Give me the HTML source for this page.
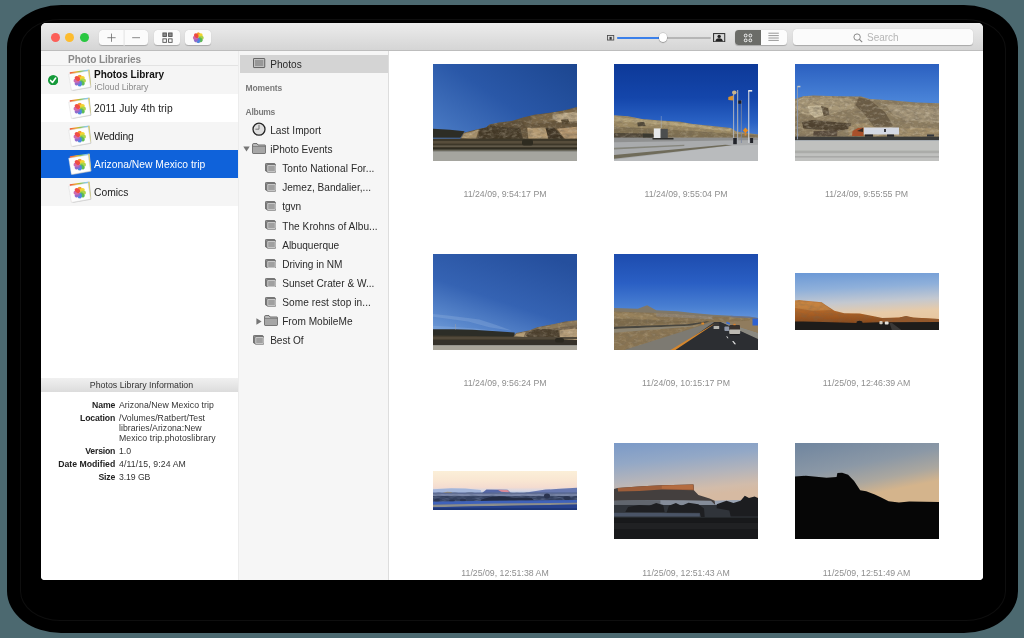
<!DOCTYPE html>
<html>
<head>
<meta charset="utf-8">
<title>Photo Libraries</title>
<style>
html,body{margin:0;padding:0;}
body{width:1024px;height:638px;overflow:hidden;background:#4c6970;font-family:"Liberation Sans",sans-serif;position:relative;}
#shadow{position:absolute;left:7px;top:5px;width:1010.5px;height:627.5px;background:#000;border-radius:54px / 42px;}
#shadowline{position:absolute;left:19.5px;top:18.5px;width:984px;height:600px;border:1px solid #0e0e0e;border-radius:40px / 30px;}
#win{position:absolute;left:41px;top:23px;width:942px;height:556.5px;background:#fff;border-radius:5px 5px 4px 4px;overflow:hidden;will-change:transform;}
#toolbar{position:absolute;left:0;top:0;width:942px;height:28px;background:linear-gradient(#ececec,#d5d5d5);border-bottom:1px solid #bdbdbd;box-sizing:border-box;}
.tl{position:absolute;top:10px;width:9.3px;height:9.3px;border-radius:50%;}
.btn{position:absolute;top:6.5px;height:15.6px;background:#fbfbfb;border-radius:3.5px;box-shadow:0 0.5px 0.8px rgba(0,0,0,.22);}
.btn svg{position:absolute;left:0;top:0;}
#left{position:absolute;left:0;top:28px;width:197px;height:529px;background:#fff;}
#lhead{position:absolute;left:0;top:0;width:197px;height:15px;background:#f6f6f6;border-bottom:1px solid #e3e3e3;box-sizing:border-box;}
#lhead span{position:absolute;left:27px;top:3.6px;font-size:10.1px;line-height:10.1px;font-weight:bold;color:#8a8a8a;white-space:nowrap;}
.lrow{position:absolute;left:0;width:197px;height:28px;}
.lrow .t{position:absolute;left:53px;top:10.4px;font-size:10.3px;line-height:10.3px;color:#222;white-space:nowrap;}
.lrow svg{position:absolute;left:25.6px;top:2.8px;}
.odd{background:#f5f5f5;}
.sel{background:#0f62da;}
.sel .t{color:#fff;}
#infohead{position:absolute;left:0;top:327px;width:197px;height:14px;background:linear-gradient(#f0f0f0,#dcdcdc);text-align:center;font-size:8.8px;line-height:14.6px;color:#333;padding-left:4px;box-sizing:border-box;}
.il{position:absolute;width:74.2px;left:0;text-align:right;font-size:8.7px;line-height:8.7px;font-weight:bold;color:#222;white-space:nowrap;}
.iv{position:absolute;left:78px;font-size:8.7px;line-height:8.7px;color:#333;white-space:nowrap;}
#mid{position:absolute;left:197px;top:28px;width:151px;height:529px;background:#f6f6f6;border-left:1px solid #ececec;border-right:1px solid #dddddd;box-sizing:border-box;}
#msel{position:absolute;left:1px;top:4px;width:148px;height:17.5px;background:#d4d4d4;}
.m{position:absolute;font-size:10.1px;line-height:10.1px;color:#2a2a2a;white-space:nowrap;}
.mh{position:absolute;left:6.6px;font-size:8.5px;color:#7a7a7a;font-weight:bold;white-space:nowrap;}
#mid svg{position:absolute;}
#content{position:absolute;left:348px;top:28px;width:594px;height:529px;background:#fff;}
.cap{position:absolute;width:181px;text-align:center;font-size:8.75px;color:#8e8e8e;white-space:nowrap;}
.ph{position:absolute;overflow:hidden;}
</style>
</head>
<body>
<svg width="0" height="0" style="position:absolute"><defs>
<symbol id="flower" viewBox="-10 -10 20 20">
<g opacity="0.92">
<ellipse cx="0" cy="-5" rx="3.4" ry="4.6" fill="#f7941d"/>
<ellipse cx="0" cy="-5" rx="3.4" ry="4.6" fill="#f2d21f" transform="rotate(45)"/>
<ellipse cx="0" cy="-5" rx="3.4" ry="4.6" fill="#a8d13a" transform="rotate(90)"/>
<ellipse cx="0" cy="-5" rx="3.4" ry="4.6" fill="#4fb748" transform="rotate(135)"/>
<ellipse cx="0" cy="-5" rx="3.4" ry="4.6" fill="#3f7fe0" transform="rotate(180)"/>
<ellipse cx="0" cy="-5" rx="3.4" ry="4.6" fill="#8a5fc8" transform="rotate(225)"/>
<ellipse cx="0" cy="-5" rx="3.4" ry="4.6" fill="#cc5fa8" transform="rotate(270)"/>
<ellipse cx="0" cy="-5" rx="3.4" ry="4.6" fill="#ef3e36" transform="rotate(315)"/>
</g>
</symbol>
<symbol id="lib" viewBox="0 0 24 24" preserveAspectRatio="none">
<defs><linearGradient id="rb" x1="0" y1="0" x2="1" y2="0"><stop offset="0" stop-color="#f0503c"/><stop offset=".3" stop-color="#f5a623"/><stop offset=".5" stop-color="#8cc63f"/><stop offset=".75" stop-color="#7fc8e8"/><stop offset="1" stop-color="#8fb4e8"/></linearGradient></defs>
<polygon points="3.2,3.6 21.8,1 23.4,18.2 5,21.2" fill="#c9c9c9"/>
<polygon points="2.6,3.2 21.4,0.6 23,17.6 4.4,20.6" fill="url(#rb)"/>
<polygon points="20.2,1.4 21.4,0.6 23,17.6 22,18" fill="#f1d84a"/>
<polygon points="2.4,6 20.6,2.4 23.2,19 5.2,22.2" fill="#b5b5b5" opacity=".55"/>
<polygon points="1.6,5.2 20.2,2 22.6,18.2 4.2,21.6" fill="#fdfdfd" stroke="#d4d4d4" stroke-width="0.4"/>
<use href="#flower" x="6" y="5.6" width="12.4" height="12.4"/>
</symbol>
<symbol id="alb" viewBox="0 0 11.6 9.8">
<rect x="0.4" y="0.4" width="9.6" height="7.8" rx="1" fill="#8e8e8e" stroke="#585858" stroke-width="0.8"/>
<rect x="1.8" y="1.6" width="9.4" height="7.8" rx="1.2" fill="#d4d4d4" stroke="#5e5e5e" stroke-width="0.8"/>
<rect x="3.2" y="2.9" width="6.6" height="5.2" fill="#a0a0a0"/>
</symbol>
<symbol id="fold" viewBox="0 0 14 11">
<path d="M0.6 1.6 Q0.6 0.6 1.6 0.6 L5 0.6 L6 2 L12.9 2 Q13.4 2 13.4 2.5 L13.4 9.9 Q13.4 10.4 12.9 10.4 L1.1 10.4 Q0.6 10.4 0.6 9.9 Z" fill="#c2c2c2" stroke="#555" stroke-width="0.85"/>
<rect x="1.1" y="3.7" width="11.8" height="6.2" fill="#a6a6a6"/>
<line x1="0.8" y1="3.4" x2="13.2" y2="3.4" stroke="#666" stroke-width="0.7"/>
</symbol>
<filter id="nzd" x="0" y="0" width="100%" height="100%"><feTurbulence type="fractalNoise" baseFrequency="0.16 0.3" numOctaves="3" seed="7"/><feColorMatrix type="matrix" values="0 0 0 0 0.16  0 0 0 0 0.13  0 0 0 0 0.09  2.2 0 0 0 -0.85"/></filter>
<filter id="nzl" x="0" y="0" width="100%" height="100%"><feTurbulence type="fractalNoise" baseFrequency="0.2 0.35" numOctaves="3" seed="23"/><feColorMatrix type="matrix" values="0 0 0 0 0.86  0 0 0 0 0.78  0 0 0 0 0.62  0 2.4 0 0 -1.15"/></filter>
</defs></svg>
<div id="shadow"></div>
<div id="shadowline"></div>
<div id="win">
<div id="toolbar">
<div class="tl" style="left:9.7px;background:#fc5f58;"></div>
<div class="tl" style="left:24.2px;background:#fdbc2e;"></div>
<div class="tl" style="left:39px;background:#29c741;"></div>
<div class="btn" style="left:57.5px;width:49.6px;"><svg width="50" height="16" viewBox="0 0 50 16"><line x1="25.1" y1="0" x2="25.1" y2="16" stroke="#e2e2e2" stroke-width="1"/><path d="M8.4 7.7 H16.6 M12.5 3.6 V11.8" stroke="#6a6a6a" stroke-width="0.8" fill="none"/><path d="M33.2 7.7 H41" stroke="#6a6a6a" stroke-width="0.8" fill="none"/></svg></div>
<div class="btn" style="left:112.6px;width:26px;"><svg width="26" height="16" viewBox="0 0 26 16"><rect x="8.9" y="2.95" width="3.5" height="3.5" fill="#8a8a8a" stroke="#505050" stroke-width="0.9"/><rect x="14.6" y="2.95" width="3.5" height="3.5" fill="#8a8a8a" stroke="#505050" stroke-width="0.9"/><rect x="8.9" y="8.85" width="3.5" height="3.5" fill="#fbfbfb" stroke="#505050" stroke-width="0.9"/><rect x="14.6" y="8.85" width="3.5" height="3.5" fill="#fbfbfb" stroke="#505050" stroke-width="0.9"/></svg></div>
<div class="btn" style="left:144.3px;width:26px;"><svg width="26" height="16" viewBox="0 0 26 16"><circle cx="13.3" cy="8.2" r="4.9" fill="#aaa" opacity=".45"/><use href="#flower" x="7.6" y="2" width="11.4" height="11.4"/></svg></div>
<svg style="position:absolute;left:566.3px;top:12.2px" width="8" height="6" viewBox="0 0 8 6"><rect x="0.45" y="0.45" width="6.3" height="4.6" fill="#dcdcdc" stroke="#4a4a4a" stroke-width="0.85"/><rect x="2.5" y="1.9" width="2.2" height="2.8" fill="#3a3a3a"/></svg>
<div style="position:absolute;left:575.5px;top:13.6px;width:94px;height:2px;background:#b6b6b6;border-radius:1px;"></div>
<div style="position:absolute;left:575.5px;top:13.6px;width:46px;height:2px;background:#3b80ea;border-radius:1px;"></div>
<div style="position:absolute;left:617.6px;top:10.2px;width:8.6px;height:8.6px;border-radius:50%;background:#fff;box-shadow:0 0.5px 1px rgba(0,0,0,.45),0 0 0 0.4px rgba(0,0,0,.15);"></div>
<svg style="position:absolute;left:672.3px;top:9.7px" width="12.3" height="9.3" viewBox="0 0 13 10" preserveAspectRatio="none"><rect x="0.6" y="0.6" width="11.8" height="8.8" fill="#d8d8d8" stroke="#333" stroke-width="1.1"/><circle cx="6.5" cy="3.7" r="1.8" fill="#222"/><path d="M2.6 9 Q2.8 5.6 6.5 5.6 Q10.2 5.6 10.4 9 Z" fill="#222"/></svg>
<div class="btn" style="left:694.2px;width:52px;background:#fcfcfc;"></div>
<div class="btn" style="left:694.2px;width:26.2px;background:#6b6c68;border-radius:3.5px 0 0 3.5px;box-shadow:none;"><svg width="26" height="16" viewBox="0 0 26 16"><g fill="none" stroke="#fff" stroke-width="0.9"><rect x="9.3" y="4.2" width="2.7" height="2.7" rx="1"/><rect x="14" y="4.2" width="2.7" height="2.7" rx="1"/><rect x="9.3" y="9" width="2.7" height="2.7" rx="1"/><rect x="14" y="9" width="2.7" height="2.7" rx="1"/></g></svg></div>
<svg style="position:absolute;left:720.4px;top:6.3px" width="26" height="16" viewBox="0 0 26 16"><path d="M7.4 4.2 H17.8 M7.4 6.6 H17.8 M7.4 9 H17.8 M7.4 11.4 H17.8" stroke="#8c8c8c" stroke-width="0.9"/></svg>
<div class="btn" style="left:752.3px;width:179.6px;height:16.4px;top:6px;"></div>
<svg style="position:absolute;left:812.3px;top:9.6px" width="10" height="10" viewBox="0 0 10 10"><circle cx="4.1" cy="4.1" r="3.2" fill="none" stroke="#858585" stroke-width="0.95"/><line x1="6.4" y1="6.4" x2="9.2" y2="9.2" stroke="#858585" stroke-width="1.1"/></svg>
<div style="position:absolute;left:826px;top:8.6px;font-size:10px;color:#b5b5b5;">Search</div>
</div>
<div id="left">
<div id="lhead"><span style="letter-spacing:-0.065px;">Photo Libraries</span></div>
<div class="lrow odd" style="top:15px;"><svg width="25" height="23.8"><use href="#lib" width="25" height="23.8"/></svg><svg style="left:6.8px;top:9px" width="10.4" height="10.4" viewBox="0 0 10 10"><circle cx="5" cy="5" r="5" fill="#159a3a"/><path d="M2.5 5.2 L4.3 7.2 L7.4 2.9" fill="none" stroke="#fff" stroke-width="1.5" stroke-linecap="round" stroke-linejoin="round"/></svg><span class="t" style="top:3.5px;font-weight:bold;font-size:10px;color:#111;letter-spacing:-0.033px;">Photos Library</span><span class="t" style="left:53.5px;top:16.3px;font-size:8.75px;color:#8a8a8a;letter-spacing:-0.006px;">iCloud Library</span></div>
<div class="lrow " style="top:43px;"><svg width="25" height="23.8"><use href="#lib" width="25" height="23.8"/></svg><span class="t" style="letter-spacing:0.057px;">2011 July 4th trip</span></div>
<div class="lrow odd" style="top:71px;"><svg width="25" height="23.8"><use href="#lib" width="25" height="23.8"/></svg><span class="t" style="letter-spacing:-0.124px;">Wedding</span></div>
<div class="lrow sel" style="top:99px;"><svg width="25" height="23.8"><use href="#lib" width="25" height="23.8"/></svg><span class="t" style="letter-spacing:0.011px;">Arizona/New Mexico trip</span></div>
<div class="lrow odd" style="top:127px;"><svg width="25" height="23.8"><use href="#lib" width="25" height="23.8"/></svg><span class="t" style="letter-spacing:0.011px;">Comics</span></div>
<div id="infohead"><span style="letter-spacing:0.007px;">Photos Library Information</span></div>
<div class="il" style="top:349.85px;letter-spacing:-0.149px;">Name</div><div class="iv" style="top:349.85px;letter-spacing:0.052px;">Arizona/New Mexico trip</div>
<div class="il" style="top:362.85px;letter-spacing:-0.119px;">Location</div><div class="iv" style="top:362.85px;letter-spacing:0.052px;">/Volumes/Ratbert/Test</div>
<div class="iv" style="top:372.65px;letter-spacing:0.024px;">libraries/Arizona:New</div>
<div class="iv" style="top:382.85px;letter-spacing:0.101px;">Mexico trip.photoslibrary</div>
<div class="il" style="top:396.05px;letter-spacing:-0.204px;">Version</div><div class="iv" style="top:396.05px;letter-spacing:0.002px;">1.0</div>
<div class="il" style="top:408.65px;letter-spacing:-0.003px;">Date Modified</div><div class="iv" style="top:408.65px;letter-spacing:0.117px;">4/11/15, 9:24 AM</div>
<div class="il" style="top:421.85px;letter-spacing:-0.152px;">Size</div><div class="iv" style="top:421.85px;letter-spacing:-0.089px;">3.19 GB</div>
</div>
<div id="mid">
<div id="msel"></div>
<svg style="left:13.8px;top:7.2px" width="13" height="11" viewBox="0 0 13 11"><rect x="0.45" y="0.45" width="11.3" height="9.1" rx="0.6" fill="#c4c4c4" stroke="#4c4c4c" stroke-width="0.85"/><rect x="1.9" y="1.9" width="8.4" height="6.2" fill="#989898"/></svg>
<div class="m" style="left:31.2px;top:8.8px;letter-spacing:0.043px;">Photos</div>
<div class="mh" style="top:32.3px;letter-spacing:-0.130px;">Moments</div>
<div class="mh" style="top:55.8px;letter-spacing:-0.295px;">Albums</div>
<svg style="left:12.8px;top:71.3px" width="14" height="14" viewBox="0 0 14 14"><circle cx="7" cy="7.2" r="6" fill="#dedede" stroke="#252525" stroke-width="1.3"/><path d="M7 2.8 L7 7.2 L3.4 7.2" fill="none" stroke="#6a6a6a" stroke-width="0.9"/></svg>
<div class="m" style="left:31.2px;top:75px;letter-spacing:0.044px;">Last Import</div>
<svg style="left:4.2px;top:95.4px" width="7" height="6" viewBox="0 0 7 6"><polygon points="0.3,0.4 6.7,0.4 3.5,5.6" fill="#767676"/></svg>
<svg style="left:13px;top:91.7px" width="14" height="11"><use href="#fold"/></svg>
<div class="m" style="left:31.2px;top:94.1px;letter-spacing:-0.002px;">iPhoto Events</div>
<svg style="left:25.7px;top:111.8px" width="11.6" height="9.8"><use href="#alb"/></svg>
<div class="m" style="left:43.2px;top:113.15px;letter-spacing:0.091px;">Tonto National For...</div>
<svg style="left:25.7px;top:130.95px" width="11.6" height="9.8"><use href="#alb"/></svg>
<div class="m" style="left:43.2px;top:132.3px;letter-spacing:0.010px;">Jemez, Bandalier,...</div>
<svg style="left:25.7px;top:150.1px" width="11.6" height="9.8"><use href="#alb"/></svg>
<div class="m" style="left:43.2px;top:151.45px;letter-spacing:-0.048px;">tgvn</div>
<svg style="left:25.7px;top:169.25px" width="11.6" height="9.8"><use href="#alb"/></svg>
<div class="m" style="left:43.2px;top:170.6px;letter-spacing:0.056px;">The Krohns of Albu...</div>
<svg style="left:25.7px;top:188.4px" width="11.6" height="9.8"><use href="#alb"/></svg>
<div class="m" style="left:43.2px;top:189.75px;letter-spacing:-0.026px;">Albuquerque</div>
<svg style="left:25.7px;top:207.55px" width="11.6" height="9.8"><use href="#alb"/></svg>
<div class="m" style="left:43.2px;top:208.9px;letter-spacing:-0.024px;">Driving in NM</div>
<svg style="left:25.7px;top:226.7px" width="11.6" height="9.8"><use href="#alb"/></svg>
<div class="m" style="left:43.2px;top:228.05px;letter-spacing:0.012px;">Sunset Crater &amp; W...</div>
<svg style="left:25.7px;top:245.85px" width="11.6" height="9.8"><use href="#alb"/></svg>
<div class="m" style="left:43.2px;top:247.2px;letter-spacing:0.090px;">Some rest stop in...</div>
<svg style="left:16.6px;top:267px" width="6" height="7" viewBox="0 0 6 7"><polygon points="0.4,0.3 0.4,6.7 5.6,3.5" fill="#767676"/></svg>
<svg style="left:25px;top:264px" width="14" height="11"><use href="#fold"/></svg>
<div class="m" style="left:43.2px;top:266.3px;letter-spacing:0.019px;">From MobileMe</div>
<svg style="left:13.7px;top:283.95px" width="11.6" height="9.8"><use href="#alb"/></svg>
<div class="m" style="left:31.2px;top:285.4px;letter-spacing:-0.054px;">Best Of</div>
</div>
<div id="content">
<svg class="ph" style="left:44px;top:13px;width:144px;height:97px" viewBox="0 0 144 97" preserveAspectRatio="none"><defs><linearGradient id="s1" x1="1" y1="0" x2="0" y2="1"><stop offset="0" stop-color="#1c4690"/><stop offset=".45" stop-color="#2a58a8"/><stop offset=".8" stop-color="#4676c0"/><stop offset="1" stop-color="#6692d0"/></linearGradient><clipPath id="c1"><polygon points="27.4,74.7 30.2,69.1 46.4,64.8 53.4,63.4 56.3,60.6 66.1,58.5 78.8,57.1 90.0,53.6 101.3,50.8 116.7,48.7 130.8,46.5 144.0,43.0 144.0,78.2 27.4,76.8"/></clipPath></defs><rect width="144" height="97" fill="url(#s1)"/><polygon points="27.4,74.7 30.2,69.1 46.4,64.8 53.4,63.4 56.3,60.6 66.1,58.5 78.8,57.1 90.0,53.6 101.3,50.8 116.7,48.7 130.8,46.5 144.0,43.0 144.0,78.2 27.4,76.8" fill="#66553b"/><g clip-path="url(#c1)"><polygon points="98.5,52.2 144.0,44.4 144.0,52.9 121.0,57.1 98.5,59.9" fill="#7a6646"/><polygon points="119.5,50.8 140.6,48.0 144.0,48.7 144.0,57.1 126.6,58.5 119.5,55.0" fill="#b9a685"/><polygon points="128.0,55.7 135.0,55.0 137.1,59.9 129.4,60.6" fill="#54462f"/><polygon points="46.4,65.5 56.3,61.3 73.1,59.9 87.2,64.1 90.0,75.4 45.0,76.1" fill="#433826"/><polygon points="56.3,61.3 66.1,59.2 78.8,57.8 90.0,57.1 92.8,64.1 73.1,63.4" fill="#5e4f38"/><polygon points="28.1,74.3 30.9,69.5 45.7,65.8 42.9,75.4" fill="#a9936d"/><polygon points="94.2,64.1 112.5,63.4 116.7,69.8 115.3,77.1 95.6,76.8" fill="#b49a72"/><polygon points="112.5,64.1 121.0,63.4 132.9,77.1 116.0,77.1" fill="#3c3121"/><polygon points="123.8,64.8 144.0,62.7 144.0,78.2 133.6,77.1" fill="#b2946d"/><rect width="144" height="97" filter="url(#nzd)" opacity=".5"/><rect width="144" height="97" filter="url(#nzl)" opacity=".3"/></g><polygon points="0.0,64.8 16.9,65.8 31.6,67.2 27.4,73.7 0.0,73.7" fill="#2d2d25"/><rect x="0" y="74.6" width="144" height="13" fill="#3d3729"/><rect x="0" y="77" width="144" height="2.6" fill="#574d3b"/><rect x="0" y="81.5" width="144" height="1.3" fill="#6a6352"/><rect x="0" y="84" width="144" height="2.2" fill="#2f2c22"/><rect x="0" y="85.4" width="144" height="1.4" fill="#5e5a4c"/><rect x="89" y="75.5" width="11" height="6" rx="2" fill="#2e2b20"/><rect x="0" y="86.8" width="144" height="10.2" fill="#a5a59f"/><rect x="0" y="86.8" width="144" height="1" fill="#8b8b84"/></svg>
<svg class="ph" style="left:225px;top:13px;width:144px;height:97px" viewBox="0 0 144 97" preserveAspectRatio="none"><defs><linearGradient id="s2" x1="0" y1="0" x2="0" y2="1"><stop offset="0" stop-color="#0d3998"/><stop offset=".35" stop-color="#1446ab"/><stop offset=".6" stop-color="#2a62c4"/><stop offset=".78" stop-color="#4f85d6"/><stop offset="1" stop-color="#4f85d6"/></linearGradient><clipPath id="c2"><polygon points="0.0,51.2 14.1,52.2 28.1,55.0 46.4,56.4 66.1,57.8 78.8,59.9 98.5,62.0 116.7,64.1 122.4,67.6 144.0,70.5 144.0,74.0 0.0,74.0"/></clipPath></defs><rect width="144" height="97" fill="url(#s2)"/><polygon points="0.0,51.2 14.1,52.2 28.1,55.0 46.4,56.4 66.1,57.8 78.8,59.9 98.5,62.0 116.7,64.1 122.4,67.6 144.0,70.5 144.0,74.0 0.0,74.0" fill="#9c8a64"/><g clip-path="url(#c2)"><polygon points="0.0,52.6 28.1,55.7 66.1,58.8 98.5,63.0 116.7,65.1 116.7,67.6 66.1,62.0 0.0,57.1" fill="#b3a27a"/><polygon points="0.0,62.7 42.2,64.8 84.4,67.6 122.4,69.8 144.0,71.2 144.0,74.0 0.0,74.0" fill="#7f7052"/><polygon points="0.0,69.1 28.1,69.5 40.1,70.5 40.1,74.0 0.0,74.0" fill="#4a4234"/><polygon points="23.2,58.5 30.2,57.8 31.6,62.0 23.9,62.4" fill="#4d4536"/><rect width="144" height="97" filter="url(#nzd)" opacity=".4"/><rect width="144" height="97" filter="url(#nzl)" opacity=".25"/></g><rect x="0" y="73.8" width="144" height="23.2" fill="#a9abad"/><polygon points="0.0,95.8 115.3,81.7 144.0,80.7 144.0,97.0 0.0,97.0" fill="#b9bbbd"/><polygon points="0.0,73.7 144.0,73.7 144.0,76.1 0.0,78.2" fill="#8f9090"/><polygon points="0.0,91.1 111.1,80.7 118.1,81.3 0.0,94.8" fill="#6f6b5a"/><polygon points="0.0,83.8 70.3,80.7 70.3,81.9 0.0,85.5" fill="#85857c"/><rect x="39.8" y="64.4" width="7" height="10" fill="#e6e8ea"/><rect x="46.6" y="64.8" width="7.2" height="9.4" fill="#4c4e4e"/><rect x="29" y="69.5" width="10" height="4" fill="#3a3930"/><rect x="38.5" y="74" width="21" height="1.5" fill="#2e2e2c"/><rect x="46.9" y="52" width="0.5" height="12" fill="#b4bccc" opacity=".8"/><rect x="119.2" y="30" width="0.9" height="48" fill="#b9bcc2"/><rect x="123.1" y="26" width="1.1" height="53" fill="#a9adb5"/><rect x="126.9" y="36" width="0.8" height="43" fill="#7d86a0"/><rect x="134.2" y="27" width="1.1" height="52" fill="#d5d8dc"/><rect x="134.2" y="26" width="4" height="1.6" fill="#e6e6e6"/><ellipse cx="120.3" cy="28.5" rx="2.3" ry="1.9" fill="#c9b48c"/><polygon points="114.3,33 119.2,31.5 119.2,36.5 114.3,36" fill="#d9922e"/><rect x="124.3" y="36.5" width="3" height="3.2" fill="#1d1d22"/><polygon points="131.5,63.6 134.2,66.4 131.5,69.2 128.8,66.4" fill="#e58a1f"/><rect x="130.6" y="69.4" width="1.8" height="2.2" fill="#d9822a"/><rect x="119.2" y="74" width="3.6" height="6.2" fill="#22242a"/><rect x="136.1" y="74" width="3" height="5" fill="#22242a"/></svg>
<svg class="ph" style="left:405.5px;top:13px;width:144px;height:97px" viewBox="0 0 144 97" preserveAspectRatio="none"><defs><linearGradient id="s3" x1="0" y1="0" x2="0" y2="1"><stop offset="0" stop-color="#2b60c0"/><stop offset=".38" stop-color="#4a84d8"/><stop offset="1" stop-color="#4a84d8"/></linearGradient><clipPath id="c3"><polygon points="0.0,35.0 8.4,32.2 18.3,31.5 42.2,32.2 66.1,32.6 74.5,35.0 98.5,36.4 121.0,38.5 144.0,39.2 144.0,73.7 0.0,73.7"/></clipPath></defs><rect width="144" height="97" fill="url(#s3)"/><polygon points="0.0,35.0 8.4,32.2 18.3,31.5 42.2,32.2 66.1,32.6 74.5,35.0 98.5,36.4 121.0,38.5 144.0,39.2 144.0,73.7 0.0,73.7" fill="#8f7f62"/><g clip-path="url(#c3)"><polygon points="63.3,33.6 74.5,35.4 90.0,48.3 98.5,62.4 78.8,62.4 70.3,51.2 60.5,41.3" fill="#6a5b44"/><polygon points="8.4,33.6 42.2,33.6 60.5,35.0 59.1,44.1 42.2,48.3 28.1,54.0 8.4,49.8 0.0,44.1 0.0,37.1" fill="#a89878"/><polygon points="12.7,42.0 26.7,41.3 28.8,51.2 19.7,53.7 14.1,49.1" fill="#c6b898"/><polygon points="26.0,42.0 33.1,44.1 34.5,51.2 28.8,51.9" fill="#5e503b"/><polygon points="7.0,58.2 16.9,56.1 56.3,59.6 54.9,64.5 42.2,67.3 8.4,64.5" fill="#4e412f"/><polygon points="53.4,62.4 67.5,58.2 78.8,63.1 144.0,64.5 144.0,73.0 53.4,73.0" fill="#a28e6a"/><polygon points="90.0,39.9 144.0,42.7 144.0,58.2 112.5,56.8 98.5,51.2" fill="#a39478"/><polygon points="18.3,67.3 42.2,66.6 42.2,72.3 18.3,72.3" fill="#56483a"/><rect width="144" height="97" filter="url(#nzd)" opacity=".55"/><rect width="144" height="97" filter="url(#nzl)" opacity=".35"/></g><rect x="0" y="72.6" width="144" height="4" fill="#3c3c3a"/><rect x="0" y="76.2" width="144" height="20.8" fill="#c0c1bf"/><rect x="0" y="86.6" width="144" height="2.6" fill="#abaca9"/><rect x="0" y="92" width="144" height="1.6" fill="#a9aaa8"/><rect x="68.8" y="63.5" width="35.2" height="7" fill="#d5d9e3"/><polygon points="57,72 57.5,67 63,64 68.4,63.6 68.4,72" fill="#a9502a"/><polygon points="62,67 68,64 68,68" fill="#3a2a22"/><rect x="70" y="70.5" width="8" height="2.2" fill="#26262a"/><rect x="92" y="70.5" width="7" height="2.2" fill="#26262a"/><rect x="89" y="65" width="2" height="3" fill="#3a3a40"/><rect x="132" y="70.5" width="7" height="2" fill="#33363c"/><rect x="2.1" y="22.4" width="0.9" height="53" fill="#8e9aae"/><rect x="2.4" y="21.8" width="3" height="1.5" fill="#c4c4c0"/></svg>
<svg class="ph" style="left:44px;top:202.5px;width:144px;height:96.5px" viewBox="0 0 144 96.5" preserveAspectRatio="none"><defs><linearGradient id="s4" x1="0.75" y1="0" x2="0.25" y2="1"><stop offset="0" stop-color="#254f9d"/><stop offset=".5" stop-color="#3563b3"/><stop offset=".8" stop-color="#5a88cc"/><stop offset="1" stop-color="#79a2da"/></linearGradient><clipPath id="c4"><polygon points="79.5,84.2 83.0,79.1 97.0,76.3 104.1,73.2 122.4,69.7 132.2,67.6 144.0,66.2 144.0,87.3 126.6,85.9 79.5,84.8"/></clipPath></defs><rect width="144" height="97" fill="url(#s4)"/><polygon points="0.0,59.9 16.9,61.7 46.4,65.5 63.3,71.1 78.8,76.7 56.3,73.2 35.2,67.6 0.0,62.7" fill="#9dbce4" opacity=".28"/><polygon points="0.0,71.8 14.1,72.5 42.2,74.6 63.3,76.7 0.0,75.3" fill="#9dbde6" opacity=".25"/><polygon points="0.0,75.3 21.1,75.2 39.4,75.8 63.3,77.2 81.6,78.6 81.6,83.1 0.0,83.1" fill="#2c2d27"/><rect x="22" y="70" width="0.5" height="5.5" fill="#9a9aa0"/><polygon points="79.5,84.2 83.0,79.1 97.0,76.3 104.1,73.2 122.4,69.7 132.2,67.6 144.0,66.2 144.0,87.3 126.6,85.9 79.5,84.8" fill="#75634a"/><g clip-path="url(#c4)"><polygon points="79.9,84.2 83.3,79.7 92.8,78.1 90.0,84.2" fill="#b59e78"/><polygon points="97.0,77.2 106.9,74.6 125.2,76.0 126.6,84.5 98.5,84.5 92.8,81.7" fill="#4a3e2c"/><polygon points="126.6,76.3 142.1,74.6 144.0,75.3 144.0,86.6 127.3,85.6" fill="#b89f7a"/><polygon points="104.1,73.9 122.4,70.1 144.0,66.9 144.0,71.1 123.8,73.9 106.9,75.3" fill="#8f7b5a"/><rect width="144" height="97" filter="url(#nzd)" opacity=".45"/><rect width="144" height="97" filter="url(#nzl)" opacity=".25"/></g><polygon points="0.0,81.4 81.6,82.4 144.0,85.9 144.0,91.5 0.0,91.5" fill="#443d2f"/><rect x="0" y="83" width="144" height="2" fill="#52493a"/><rect x="0" y="86" width="144" height="5.4" fill="#35312a"/><rect x="122" y="84" width="9" height="4.5" rx="2" fill="#2b2820"/><rect x="0" y="91.2" width="144" height="5.8" fill="#a9a59a"/></svg>
<svg class="ph" style="left:225px;top:202.5px;width:144px;height:96.5px" viewBox="0 0 144 96.5" preserveAspectRatio="none"><defs><linearGradient id="s5" x1="0" y1="0" x2="0" y2="1"><stop offset="0" stop-color="#1d4cae"/><stop offset=".3" stop-color="#2a5fc4"/><stop offset=".55" stop-color="#4a80d2"/><stop offset=".66" stop-color="#6293da"/><stop offset="1" stop-color="#6293da"/></linearGradient><clipPath id="c5"><polygon points="0.0,57.6 42.2,59.0 98.5,62.5 116.7,63.2 144.0,64.6 144.0,97.5 0.0,97.5"/></clipPath></defs><rect width="144" height="97" fill="url(#s5)"/><polygon points="0.0,54.1 23.9,54.8 33.1,51.3 42.2,56.2 63.3,57.3 78.8,59.0 98.5,60.7 116.7,61.8 144.0,63.9 144.0,68.8 0.0,68.8" fill="#807868"/><polygon points="116.7,61.8 135.0,62.5 144.0,63.9 144.0,66.7 116.7,65.3" fill="#6d7488"/><polygon points="0.0,57.6 42.2,59.0 98.5,62.5 116.7,63.2 144.0,64.6 144.0,97.5 0.0,97.5" fill="#8a7553"/><g clip-path="url(#c5)"><polygon points="42.2,59.0 63.3,57.6 98.5,61.5 98.5,65.3 42.2,62.5" fill="#8f8270"/><polygon points="0.0,58.3 35.2,59.7 46.4,66.0 0.0,64.6" fill="#98825c"/><polygon points="0.0,64.6 46.4,66.0 87.2,68.1 0.0,71.7" fill="#7d6b4c"/><rect width="144" height="97" filter="url(#nzd)" opacity=".35"/><rect width="144" height="97" filter="url(#nzl)" opacity=".2"/></g><polygon points="0.0,72.8 73.1,70.3 92.8,67.2 95.6,67.7 75.9,71.7 0.0,75.0" fill="#48463f"/><polygon points="0.0,75.0 75.9,71.7 84.4,71.9 0.0,78.7" fill="#8e8674"/><polygon points="98.2,68.1 100.7,68.1 59.1,97.5 5.6,97.5" fill="#7d7a72"/><polygon points="100.4,68.1 107.2,68.1 144.0,84.3 144.0,97.5 58.4,97.5" fill="#2c2e32"/><polygon points="99.3,70.3 100.1,70.3 59.1,97.5 54.1,97.5" fill="#d4862e"/><polygon points="106.9,68.1 109.7,68.1 144.0,78.7 144.0,85.0" fill="#8a8880"/><polygon points="109.7,68.1 144.0,66.3 144.0,78.7" fill="#907c5e"/><rect x="138.5" y="64.5" width="5.5" height="7" fill="#2f62d0"/><polygon points="112.4,67.6 116,69 116,70.6 112.4,69.4" fill="#3a6fd8"/><rect x="87.4" y="68.5" width="2.6" height="2" fill="#e08a2a"/><rect x="99.6" y="68.6" width="5.6" height="3.4" fill="#3c3a38"/><rect x="99.6" y="72" width="5.6" height="3" fill="#b5b5b0"/><rect x="110.4" y="72.4" width="5" height="4.6" rx="1" fill="#8f96a6"/><rect x="115.4" y="71" width="10.6" height="5" rx="1" fill="#38322e"/><rect x="115.2" y="75.5" width="11" height="4.6" rx="1" fill="#bcb9b2"/><rect x="116" y="80" width="9.6" height="1.2" fill="#1c1c1e"/><rect x="119.4" y="69.8" width="2.2" height="1.4" fill="#e0822a"/><polygon points="112.2,82.2 113.1,82.2 114.5,84.3 113.4,84.3" fill="#dcdcdc"/><polygon points="118.1,87.1 119.5,87.1 122.1,90.2 120.4,90.2" fill="#dcdcdc"/></svg>
<svg class="ph" style="left:405.5px;top:221.5px;width:144px;height:57.2px" viewBox="0 0 144 57.2" preserveAspectRatio="none"><defs><linearGradient id="s6" x1="0" y1="0" x2="0.12" y2="1"><stop offset="0" stop-color="#6a98d6"/><stop offset=".3" stop-color="#8fb0da"/><stop offset=".55" stop-color="#c3c8d0"/><stop offset=".75" stop-color="#e8cba8"/><stop offset="1" stop-color="#e8c49c"/></linearGradient><linearGradient id="m6" x1="0" y1="0" x2="0" y2="1"><stop offset="0" stop-color="#c47c3a"/><stop offset=".5" stop-color="#ac6226"/><stop offset="1" stop-color="#84461a"/></linearGradient><clipPath id="c6"><polygon points="0.0,27.6 4.2,27.1 26.7,29.3 30.2,31.8 39.4,37.7 49.2,40.2 64.7,40.5 78.8,43.3 87.2,45.0 104.1,44.4 111.1,43.0 118.1,44.4 144.0,45.9 144.0,51.8 0.0,51.8"/></clipPath></defs><rect width="144" height="57.2" fill="url(#s6)"/><polygon points="0.0,27.6 4.2,27.1 26.7,29.3 30.2,31.8 39.4,37.7 49.2,40.2 64.7,40.5 78.8,43.3 87.2,45.0 104.1,44.4 111.1,43.0 118.1,44.4 144.0,45.9 144.0,51.8 0.0,51.8" fill="url(#m6)"/><g clip-path="url(#c6)"><polygon points="87.2,45.3 104.1,44.7 111.1,43.3 118.1,44.7 144.0,46.1 144.0,51.8 87.2,51.8" fill="#96582a"/><polygon points="0.0,28.1 26.7,29.8 36.6,37.0 16.9,37.7 0.0,34.9" fill="#cc8e4a" opacity=".6"/><rect width="144" height="57.2" filter="url(#nzd)" opacity=".3"/></g><polygon points="0.0,48.4 28.1,48.9 61.9,50.1 84.4,49.2 144.0,48.9 144.0,57.4 0.0,57.4" fill="#1e1c1a"/><ellipse cx="64.5" cy="49.4" rx="3" ry="1.6" fill="#1e1c1a"/><polygon points="94.5,50.1 97.0,50.1 106.9,57.4 97.0,57.4" fill="#3a3836"/><rect x="84.4" y="48" width="3.2" height="3.2" rx=".8" fill="#cfc8ba"/><rect x="89.8" y="48.6" width="3.8" height="3" rx=".8" fill="#e4e2dc"/></svg>
<svg class="ph" style="left:44px;top:420px;width:144px;height:39px" viewBox="0 0 144 39" preserveAspectRatio="none"><defs><linearGradient id="s7" x1="0" y1="0" x2="0" y2="1"><stop offset="0" stop-color="#fbefd8"/><stop offset=".25" stop-color="#f9e6d2"/><stop offset=".42" stop-color="#f4dcd0"/><stop offset=".5" stop-color="#d9d7e2"/><stop offset=".56" stop-color="#bccae4"/><stop offset="1" stop-color="#bccae4"/></linearGradient><filter id="nz7" x="0" y="0" width="100%" height="100%"><feTurbulence type="fractalNoise" baseFrequency="0.12 0.5" numOctaves="2" seed="5"/><feColorMatrix type="matrix" values="0 0 0 0 0.12  0 0 0 0 0.16  0 0 0 0 0.28  2.6 0 0 0 -1.1"/></filter></defs><rect width="144" height="39" fill="url(#s7)"/><polygon points="0.0,18.3 18.3,17.2 32.3,17.4 47.8,19.1 47.8,21.9 0.0,21.9" fill="#a3b5da"/><polygon points="92.8,21.7 101.3,20.3 112.5,18.6 126.6,17.7 144.0,16.7 144.0,21.9 92.8,21.9" fill="#6878b0"/><polygon points="49.2,21.9 53.4,18.6 74.5,18.8 77.6,21.7" fill="#5567a6"/><polygon points="64.7,18.8 74.5,19.1 76.8,21.4 68.2,20.8" fill="#d98c9a"/><polygon points="9.8,21.9 14.1,20.8 18.3,21.1 19.7,22.2" fill="#b8a070"/><rect x="0" y="21.6" width="144" height="17.4" fill="#4a5a88"/><rect x="0" y="22.6" width="144" height="2.6" fill="#7a86a8"/><rect x="0" y="25" width="144" height="5.4" fill="#33405f"/><rect x="0" y="21.6" width="144" height="9" filter="url(#nz7)" opacity=".8"/><polygon points="47.8,28.7 56.3,26.2 66.1,25.2 78.8,26.6 98.5,27.0 101.3,29.5 47.8,30.1" fill="#232c44"/><ellipse cx="114" cy="25" rx="3" ry="2.4" fill="#2a3450"/><ellipse cx="134" cy="27" rx="3.6" ry="2" fill="#2a3450"/><ellipse cx="30" cy="29" rx="3" ry="1.6" fill="#2a3450"/><ellipse cx="4" cy="29.4" rx="3" ry="1.4" fill="#2a3450"/><ellipse cx="19" cy="29.6" rx="3" ry="1.2" fill="#2a3450"/><polygon points="0.0,30.7 60.5,29.8 144.0,29.0 144.0,31.8 60.5,32.9 0.0,33.8" fill="#3f62ba"/><polygon points="0.0,33.8 60.5,32.6 144.0,31.8 144.0,33.5 60.5,34.9 0.0,36.3" fill="#8c8e8c"/><polygon points="0.0,36.3 60.5,34.9 144.0,33.5 144.0,38.8 0.0,38.8" fill="#27428e"/><rect x="0" y="37.2" width="144" height="1.8" fill="#1e3676"/></svg>
<svg class="ph" style="left:225px;top:391.5px;width:144px;height:96.3px" viewBox="0 0 144 96.3" preserveAspectRatio="none"><defs><linearGradient id="s8" x1="0" y1="0" x2="0.15" y2="1"><stop offset="0" stop-color="#7b9ac8"/><stop offset=".22" stop-color="#93a8c6"/><stop offset=".4" stop-color="#b4b4ba"/><stop offset=".55" stop-color="#d2bcaa"/><stop offset=".62" stop-color="#d6baa2"/><stop offset="1" stop-color="#d6baa2"/></linearGradient></defs><rect width="144" height="97" fill="url(#s8)"/><polygon points="98.5,57.7 121.0,57.0 144.0,57.3 144.0,62.7 98.5,62.7" fill="#9aa4b4"/><polygon points="0.0,46.1 3.5,44.9 28.1,43.3 47.8,42.3 79.5,41.6 79.9,47.2 84.4,52.1 95.6,55.6 100.6,57.7 101.3,62.0 0.0,62.0" fill="#443f3e"/><polygon points="3.5,44.9 28.1,43.3 47.8,42.3 79.5,41.6 79.9,47.2 47.8,46.6 25.3,48.0 4.2,48.6" fill="#9e5e3a"/><polygon points="47.8,42.7 78.8,41.8 79.2,46.3 47.8,45.8" fill="#b46c40"/><polygon points="0.0,57.7 28.1,57.0 70.3,57.3 97.0,57.7 101.3,62.0 0.0,62.7" fill="#858d9a"/><polygon points="0.0,57.7 28.1,57.0 46.4,57.3 46.4,62.7 0.0,62.7" fill="#4a4c52" opacity=".6"/><rect x="0" y="62" width="144" height="14" fill="#30343a"/><polygon points="11.3,69.0 14.1,64.1 25.3,62.0 35.2,62.7 42.2,60.1 49.2,62.0 50.6,69.0" fill="#1e1f22"/><polygon points="52.7,69.4 54.9,62.7 61.9,60.1 67.5,62.7 74.5,59.8 84.4,61.3 90.0,65.5 90.7,73.9 87.2,73.9 85.8,69.7" fill="#1e1f22"/><polygon points="102.7,61.3 112.5,57.7 119.5,60.1 126.6,57.7 130.8,52.8 135.0,54.9 140.6,53.5 144.0,54.9 144.0,73.6 116.7,73.6 115.3,67.6 102.7,65.2" fill="#1c1d20"/><polygon points="0.0,69.7 85.8,70.3 85.8,73.4 0.0,73.4" fill="#4a5466"/><rect x="0" y="74.6" width="144" height="22.4" fill="#18191b"/><rect x="0" y="80" width="144" height="6" fill="#202123"/></svg>
<svg class="ph" style="left:405.5px;top:391.5px;width:144px;height:96.5px" viewBox="0 0 144 96.5" preserveAspectRatio="none"><defs><linearGradient id="s9" x1="0" y1="0" x2="0.3" y2="1"><stop offset="0" stop-color="#6f859f"/><stop offset=".32" stop-color="#8b98a6"/><stop offset=".5" stop-color="#aba79f"/><stop offset=".63" stop-color="#d4b48c"/><stop offset="1" stop-color="#d4b48c"/></linearGradient></defs>
<rect width="144" height="97" fill="url(#s9)"/>
<polygon points="0.0,33.4 10.9,32.8 31.6,34.8 41.6,34.1 42.4,30.0 47.1,29.7 53.1,31.7 59.1,37.9 65.2,47.2 71.2,48.3 79.8,51.4 86.7,54.8 93.6,58.3 104.0,59.5 114.3,58.6 144.1,59.0 144.1,96.9 0.0,96.9" fill="#060606"/>
</svg>
<div class="cap" style="left:25.5px;top:138.3px;">11/24/09, 9:54:17 PM</div>
<div class="cap" style="left:206.5px;top:138.3px;">11/24/09, 9:55:04 PM</div>
<div class="cap" style="left:387px;top:138.3px;">11/24/09, 9:55:55 PM</div>
<div class="cap" style="left:25.5px;top:327.3px;">11/24/09, 9:56:24 PM</div>
<div class="cap" style="left:206.5px;top:327.3px;">11/24/09, 10:15:17 PM</div>
<div class="cap" style="left:387px;top:327.3px;">11/25/09, 12:46:39 AM</div>
<div class="cap" style="left:25.5px;top:516.8px;">11/25/09, 12:51:38 AM</div>
<div class="cap" style="left:206.5px;top:516.8px;">11/25/09, 12:51:43 AM</div>
<div class="cap" style="left:387px;top:516.8px;">11/25/09, 12:51:49 AM</div>
</div>
</div>
</body>
</html>
